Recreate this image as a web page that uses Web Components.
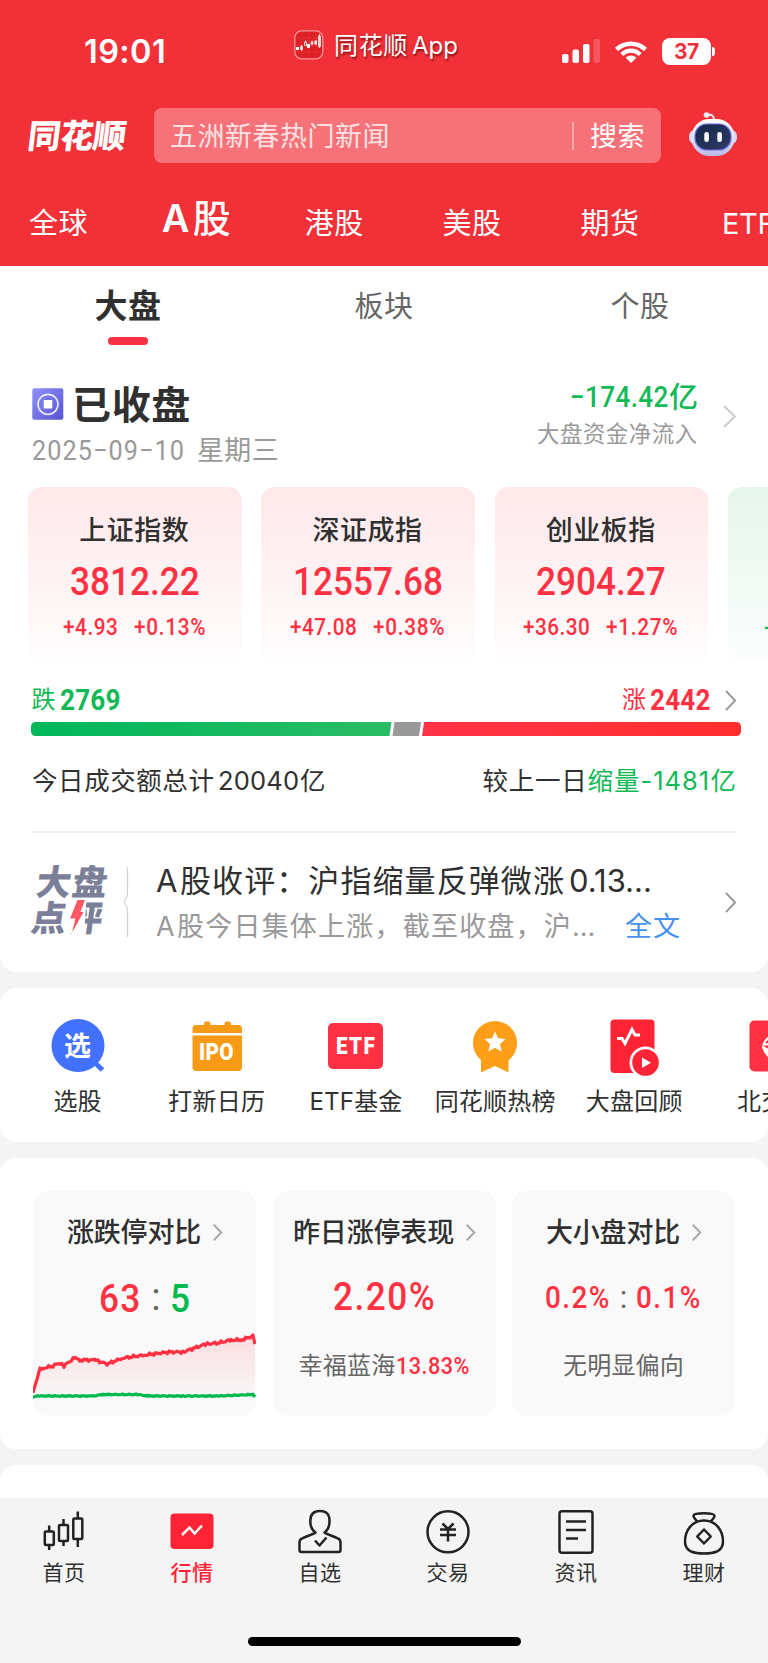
<!DOCTYPE html>
<html lang="zh-CN">
<head>
<meta charset="utf-8">
<meta name="viewport" content="width=device-width, initial-scale=1">
<title>同花顺 A股行情</title>
<style>
    :root {
        --red: #ff3142;
        --green: #12b956;
        --ink: #303030;
        --muted: #999999;
        --header: #f23038;
        --page: #f4f4f4;
    }

    body {
        margin: 0;
        background: var(--page);
        color: var(--ink);
        font-family: Inter, "Noto Sans CJK SC", sans-serif;
        overflow: hidden;
    }
</style>
</head>
<body>
<market-page></market-page>

<script>
function defineView( name, html, setup ) {
    const template = document.createElement('template');
    template.innerHTML = html;

    window.customElements.define( name, class extends HTMLElement {
        constructor(){
            super();
            this.attachShadow( { mode:"open" } );
            this.shadowRoot.appendChild( template.content.cloneNode( true ) );
        }

        connectedCallback() {
            if ( setup ) {
                setup( this, this.shadowRoot );
            }
        }
    } );
}

/* One line of text. w spreads the letters over a given width, num sets condensed figures. */
defineView( 'text-line', `
    <style>
        :host {
            display: inline-block;
            flex: none;
            white-space: nowrap;
            line-height: 1;
            text-align: left;
        }
        :host([num]) {
            font-family: Roboto, "Noto Sans CJK SC", sans-serif;
        }
        :host([num][w]) span {
            display: inline-block;
            transform: scaleX(.9);
            transform-origin: 0 50%;
        }
    </style>
    <span><slot></slot></span>
`, ( host, root ) => {
    const weight = host.getAttribute('weight');
    const color = host.getAttribute('color');
    host.style.fontSize = host.getAttribute('size') + 'px';
    if ( weight ) host.style.fontWeight = weight;
    if ( color ) host.style.color = color;

    const w = Number( host.getAttribute('w') );
    if ( w ) {
        host.style.width = 'auto';
        host.style.letterSpacing = '0px';
        const scale = host.hasAttribute('num') ? .9 : 1;
        const natural = root.querySelector('span').offsetWidth;
        const count = [ ...host.textContent ].length;
        host.style.letterSpacing = ( ( w / scale - natural ) / count ).toFixed( 3 ) + 'px';
        host.style.width = w + 'px';
    }
} );

const icons = {
    chevron: [ 12, 24, `<path d="M1 1 11 12 1 23" fill="none" stroke="currentColor" stroke-width="2" vector-effect="non-scaling-stroke"/>` ],
    app: [ 30, 30, `
        <rect x=".8" y=".8" width="28" height="28" rx="7" fill="#dd2025" stroke="#f5969a" stroke-width="1.3"/>
        <path d="M2 8h25M2 15h25M2 22h25M8 2v25M15 2v25M22 2v25" stroke="#ea3a3d" stroke-width=".5"/>
        <path d="M2 17h3v3H2zM13 14h3v4h-3zM20.500 10.500h2.500v4h-2.500z" fill="#fff"/>
        <path d="M6.500 16.500h2v3h-2zM10.500 12h2v3.500h-2zM17 12h2v2h-2zM24.500 6h2v10.500h-2zM7.500 15v6M11.500 10.500v2M18 10.500v5M25.500 4v14" fill="none" stroke="#fff" stroke-width=".8"/>` ],
    signal: [ 38, 25, `
        <rect x="0" y="15" width="6.500" height="9" rx="2" fill="#fff"/>
        <rect x="10.500" y="10.500" width="6.500" height="13.500" rx="2" fill="#fff"/>
        <rect x="21" y="5" width="6.500" height="19" rx="2" fill="#fff"/>
        <rect x="31.500" y="0" width="6.500" height="24" rx="2" fill="#fff" opacity=".2"/>` ],
    wifi: [ 34, 24, `
        <path d="M1 8.800C10 .3 24 .3 33 8.800L30 12.200C23 5.200 11 5.200 4 12.200ZM6.300 14C12.500 8.100 21.500 8.100 27.700 14L24.600 17C20 12.700 14 12.700 9.400 17ZM11.700 18.700C15 15.900 19 15.900 22.300 18.700L17 24Z" fill="#fff"/>` ],
    robot: [ 48, 46, `
        <defs>
            <linearGradient id="shell" x2="0" y2="1"><stop stop-color="#fff"/><stop offset=".6" stop-color="#dcdff5"/><stop offset="1" stop-color="#b9b9e6"/></linearGradient>
            <linearGradient id="face" x2="1" y2="1"><stop stop-color="#15294a"/><stop offset="1" stop-color="#2e3a66"/></linearGradient>
        </defs>
        <path d="M18 4.500Q24 2 25 8" fill="none" stroke="#f0effa" stroke-width="2"/>
        <circle cx="17.500" cy="4" r="2.800" fill="#f3eefa"/>
        <rect x="0" y="19" width="48" height="14" rx="6" fill="#d7daf2"/>
        <rect x="2.500" y="8" width="43" height="37" rx="18" fill="url(#shell)"/>
        <rect x="6" y="13" width="36" height="26" rx="12" fill="url(#face)" stroke="#7069df" stroke-width="1.200"/>
        <rect x="15.300" y="21" width="4.600" height="10" rx="2.300" fill="#fff"/>
        <rect x="28.300" y="21" width="4.600" height="10" rx="2.300" fill="#fff"/>` ],
    coin: [ 32, 32, `
        <defs><linearGradient id="coin" x2="1" y2="1"><stop stop-color="#8f92fa"/><stop offset="1" stop-color="#5652d0"/></linearGradient></defs>
        <rect x=".3" y=".3" width="31" height="31.500" rx="2" fill="url(#coin)"/>
        <circle cx="16" cy="16.300" r="10" fill="none" stroke="#fff" stroke-opacity=".85" stroke-width="1.700"/>
        <rect x="11.700" y="12" width="8.600" height="8.600" rx=".8" fill="#fff"/>` ],
    brace: [ 6, 70, `<path d="M4.500 0V27Q4.500 29.500 2.500 32Q.8 34.500 2.500 37.500Q4.500 40 4.500 43V70" fill="none" stroke="#d2d2d2" stroke-width="1.200"/>` ],
    bolt: [ 14, 33, `<path d="M6 0H13.500L9.800 12H13L3 32.500 5.200 18.500H0Z" fill="#ff5763"/>` ],
    pick: [ 54, 54, `<circle cx="27" cy="26.500" r="26.500" fill="#4271ff"/><path d="M43 43 51.500 51" stroke="#4271ff" stroke-width="5"/>` ],
    calendar: [ 50, 50, `
        <path d="M4 4h8V2.500Q12 .5 14 .5h2.500Q18.500 .5 18.500 2.500V4h14V2.500Q32.500 .5 34.500 .5H37Q39 .5 39 2.500V4h7Q50 4 50 8v4H.5V8Q.5 4 4 4Z" fill="#f79b17"/>
        <path d="M.5 14.500H50V46Q50 50 46 50H4.500Q.5 50 .5 46Z" fill="#f79b17"/>` ],
    plate: [ 55, 46, `<rect width="55" height="46" rx="5" fill="#ff3142"/>` ],
    medal: [ 44, 53, `
        <path d="M8 38V52.500L22 46 35.500 52.500V38Z" fill="#ff9e18"/>
        <circle cx="22" cy="23" r="22" fill="#ff9e18"/>
        <path d="M22 11.500 25 18.300 32.500 19 27 24 28.600 31.500 22 27.700 15.400 31.500 17 24 11.500 19 19 18.300Z" fill="#fff"/>` ],
    review: [ 50, 57, `
        <rect x=".5" y=".5" width="44" height="53.500" rx="4" fill="#ff2435"/>
        <path d="M7 19.500H12L15 24.500 22 10.500 25 16H30" fill="none" stroke="#fff" stroke-width="3"/>
        <circle cx="35.500" cy="43.500" r="16" fill="#fff"/>
        <circle cx="35.500" cy="43.500" r="13.300" fill="#ff2435"/>
        <path d="M32 38.500 41 43.800 32 49Z" fill="#fff"/>` ],
    north: [ 50, 52, `
        <rect x=".5" y=".5" width="49" height="51" rx="5" fill="#ff3142"/>
        <path d="M20 16Q14 20 13 27Q15 34 20 38V29L14 26 20 25Z" fill="#fff"/><path d="M17 23l6-5" stroke="#ff3142" stroke-width="2"/>` ],
    candles: [ 44, 44, `
        <g fill="none" stroke="#222" stroke-width="2.500">
            <rect x="2.800" y="21.500" width="9" height="13.500" rx="1"/><path d="M7.200 15.500V21.500M7.200 35V40"/>
            <rect x="17" y="15" width="9" height="16" rx="1"/><path d="M21.500 9V15M21.500 31V36"/>
            <rect x="31.300" y="8.500" width="9" height="20.500" rx="1"/><path d="M35.800 1.500V8.500M35.800 29V37"/>
        </g>` ],
    quote: [ 44, 44, `
        <rect x=".5" y="3.500" width="43" height="35.500" rx="4" fill="#ff2435"/>
        <path d="M12 25 19.500 17.500 24.500 23.500 32 15.500" fill="none" stroke="#fff" stroke-width="2.500"/>` ],
    person: [ 44, 44, `
        <g fill="none" stroke="#222" stroke-width="2.500" stroke-linejoin="round">
            <path d="M17.500 22.500Q12.300 19 12.300 11Q12.300 1 22 1T31.500 11Q31.500 19 26.500 22.500C27 24 39 27 41.500 29.500Q42.500 30.500 42.500 33V40Q42.500 42 40.500 42H3.500Q1.500 42 1.500 40V33Q1.500 30.500 2.500 29.500C5 27 17 24 17.500 22.500Z"/>
            <path d="M17 30.500 21.500 35.500 28.500 27.500"/>
        </g>` ],
    yen: [ 44, 44, `
        <g fill="none" stroke="#222" stroke-width="2.500">
            <circle cx="22" cy="21.800" r="20.500"/>
            <path d="M16.500 13.500 22 19 27.500 13.500M14 19.500H30M14 25H30M22 19V31.500"/>
        </g>` ],
    news: [ 44, 44, `
        <g fill="none" stroke="#222" stroke-width="2.500">
            <rect x="5.500" y="1.300" width="33" height="41.500" rx="2.500"/>
            <path d="M12 11.500H32M12 20H32M12 28.500H24"/>
        </g>` ],
    purse: [ 44, 44, `
        <g fill="none" stroke="#222" stroke-width="2.500" stroke-linejoin="round">
            <path d="M15.500 12C14.500 9.500 11.500 8.500 11.500 6Q11.500 3.200 22 3.200T32.500 6C32.500 8.500 29.500 9.500 28.500 12"/>
            <path d="M22 10.500C34 10.500 41 20.500 41 31.500Q41 38.500 35 41.500Q30 43.500 22 43.500T9 41.500Q3 38.500 3 31.500C3 20.500 10 10.500 22 10.500Z"/>
            <path d="M22 19.500 28.800 26.500 22 33.500 15.200 26.500Z"/>
        </g>` ]
};

defineView( 'app-icon', `
    <style>
        :host { display: block; flex: none; }
        svg { display: block; width: 100%; height: 100%; overflow: visible; }
    </style>
    <svg preserveAspectRatio="none"></svg>
`, ( host, root ) => {
    const [ width, height, shapes ] = icons[ host.getAttribute('name') ];
    const svg = root.querySelector('svg');
    svg.setAttribute( 'viewBox', `0 0 ${ width } ${ height }` );
    svg.innerHTML = shapes;
    host.style.width = ( host.getAttribute('width') || width ) + 'px';
    host.style.height = ( host.getAttribute('height') || height ) + 'px';
} );

defineView( 'status-bar', `
    <style>
        :host { display: flex; height: 108px; color: #fff; padding: 0 53px 0 84px; }
        .time, .system { height: 102px; display: flex; align-items: center; }
        .time { height: 104px; }
        .app { height: 90px; display: flex; align-items: center; gap: 10px; margin-left: 128px; }
        .app text-line { text-shadow: 1px 2px 2px rgba(60, 0, 0, .6); padding-top: 1px; }
        .system { margin-left: auto; gap: 14px; }
        .battery { display: flex; align-items: center; gap: 1px; }
        .level { width: 49px; height: 27px; border-radius: 8px; background: #fff; color: var(--header); display: flex; align-items: center; justify-content: center; }
        .nub { width: 3px; height: 9px; border-radius: 0 4px 4px 0; background: #fff; }
    </style>
    <div class="time"><text-line size="32.5" weight="600" w="82">19:01</text-line></div>
    <div class="app">
        <app-icon name="app"></app-icon>
        <text-line size="24" w="74">同花顺</text-line>
        <text-line size="24" w="46" style="margin-left: -6px">App</text-line>
    </div>
    <div class="system">
        <app-icon name="signal"></app-icon>
        <app-icon name="wifi"></app-icon>
        <div class="battery">
            <div class="level"><text-line size="21" weight="700" w="25">37</text-line></div>
            <div class="nub"></div>
        </div>
    </div>
` );

defineView( 'search-bar', `
    <style>
        :host { display: flex; align-items: center; height: 55px; padding: 0 31px 0 28px; color: #fff; }
        .logo { width: 97px; padding-top: 1px; transform: skewX(-7deg); }
        .box { width: 507px; height: 55px; margin-left: 29px; box-sizing: border-box; padding: 0 16px 0 16px; border-radius: 8px; background: rgba(255, 255, 255, .32); display: flex; align-items: center; }
        .box text-line { padding-top: 2px; }
        .word { opacity: .8; }
        .rule { width: 2px; height: 28px; margin: 0 16px 0 auto; background: rgba(255, 255, 255, .4); }
        .robot { margin: -3px 0 0 auto; }
    </style>
    <div class="logo"><text-line size="33" weight="900" w="98">同花顺</text-line></div>
    <div class="box">
        <text-line class="word" size="27" w="220">五洲新春热门新闻</text-line>
        <div class="rule"></div>
        <text-line size="27" w="55">搜索</text-line>
    </div>
    <app-icon class="robot" name="robot"></app-icon>
` );

defineView( 'market-nav', `
    <style>
        :host { display: flex; height: 86px; padding-top: 17px; margin-left: -10.500px; color: #fff; overflow: hidden; }
        div { flex: none; width: 137.900px; display: flex; align-items: center; justify-content: center; }
        .on { padding-bottom: 12px; height: 75px; gap: 4px; }
    </style>
    <div><text-line size="29" w="59">全球</text-line></div>
    <div class="on"><text-line size="38" weight="600" w="27">A</text-line><text-line size="38" weight="500">股</text-line></div>
    <div><text-line size="29" w="59">港股</text-line></div>
    <div><text-line size="29" w="59">美股</text-line></div>
    <div><text-line size="29" w="59">期货</text-line></div>
    <div><text-line size="29" w="52">ETF</text-line></div>
` );

defineView( 'market-tabs', `
    <style>
        :host { display: grid; grid-template-columns: repeat(3, 1fr); height: 80px; padding: 0; }
        div { display: flex; flex-direction: column; align-items: center; }
        span { height: 60px; padding-top: 10px; display: flex; align-items: center; }
        i { width: 40px; height: 8px; margin-top: 1px; border-radius: 4px; background: var(--red); }
    </style>
    <div><span><text-line size="33" weight="700" w="67">大盘</text-line></span><i></i></div>
    <div><span><text-line size="29" w="59" color="#666">板块</text-line></span></div>
    <div><span><text-line size="29" w="59" color="#666">个股</text-line></span></div>
` );

defineView( 'market-state', `
    <style>
        :host { display: flex; height: 141px; padding: 0 32px; }
        .left { flex: 1; padding-top: 38px; }
        .name { height: 40px; display: flex; align-items: center; gap: 8px; }
        .date { height: 51px; padding-top: 1px; display: flex; align-items: center; gap: 12px; color: var(--muted); }
        .flow { padding-top: 31px; text-align: right; }
        .sum { height: 40px; display: flex; align-items: center; justify-content: flex-end; color: var(--green); }
        .hint { height: 34px; display: flex; align-items: center; color: var(--muted); }
        .more { margin: 59px 0 0 25px; color: #ccc; }
    </style>
    <div class="left">
        <div class="name"><app-icon name="coin"></app-icon><text-line size="39" weight="700" w="119">已收盘</text-line></div>
        <div class="date"><text-line num size="28" weight="400" w="153">2025−09−10</text-line><text-line size="27" w="82">星期三</text-line></div>
    </div>
    <div class="flow">
        <div class="sum"><text-line num size="29" weight="500" w="99">−174.42</text-line><text-line size="29" weight="500">亿</text-line></div>
        <div class="hint"><text-line size="22.5" w="161">大盘资金净流入</text-line></div>
    </div>
    <app-icon class="more" name="chevron" width="13" height="23"></app-icon>
` );

defineView( 'index-card', `
    <style>
        :host { flex: none; display: block; box-sizing: border-box; width: 213.6px; height: 175px; padding-top: 23px; border-radius: 14px; background: linear-gradient(#ffe8ea, #fffdfd); }
        :host([down]) { background: linear-gradient(#e6f6ec, #fcfefd); color: var(--green); }
        div { display: flex; align-items: center; justify-content: center; color: var(--red); }
        .title { height: 40px; padding-right: 1px; color: var(--ink); }
        .value { height: 60px; padding-top: 2px; }
        .change { height: 30px; gap: 16px; padding-right: 1px; }
        :host([down]) .change { color: var(--green); justify-content: flex-start; padding-left: 36px; }
    </style>
    <div class="title"><slot name="title"></slot></div>
    <div class="value"><slot name="value"></slot></div>
    <div class="change"><slot></slot></div>
` );

defineView( 'rise-fall', `
    <style>
        :host { display: block; }
        .counts { height: 44px; padding: 16px 32px 0 31.500px; display: flex; align-items: center; gap: 4px; }
        .counts app-icon { margin-left: 10px; color: #999; }
        .up, .down { display: flex; align-items: center; gap: 4px; }
        .down { color: var(--green); }
        .up { color: var(--red); margin-left: auto; }
        svg { display: block; margin-left: 30.500px; }
    </style>
    <div class="counts">
        <div class="down"><text-line size="24">跌</text-line><text-line num size="29" weight="700" w="61">2769</text-line></div>
        <div class="up"><text-line size="24">涨</text-line><text-line num size="29" weight="700" w="61">2442</text-line></div>
        <app-icon name="chevron" width="11" height="21"></app-icon>
    </div>
    <svg width="710" height="14" viewBox="0 0 709 14" preserveAspectRatio="none">
        <defs>
            <linearGradient id="fall"><stop stop-color="#00b75a"/><stop offset="1" stop-color="#29bc64"/></linearGradient>
            <linearGradient id="rise"><stop stop-color="#ff3347"/><stop offset="1" stop-color="#ff2f2f"/></linearGradient>
        </defs>
        <path d="M5 0H360L358 14H5Q0 14 0 9V5Q0 0 5 0Z" fill="url(#fall)"/>
        <path d="M363 0H389.500L387.500 14H361Z" fill="#999"/>
        <path d="M392.500 0H704Q709 0 709 5V9Q709 14 704 14H390.500Z" fill="url(#rise)"/>
    </svg>
` );

defineView( 'turnover-row', `
    <style>
        :host { display: flex; align-items: center; height: 95px; padding: 0 32px; border: 0; }
        div { display: flex; align-items: center; padding-bottom: 6px; }
        .diff { margin-left: auto; }
        .diff .g { color: var(--green); }
    </style>
    <div>
        <text-line size="25.500" w="183">今日成交额总计</text-line><text-line size="25.500" w="81" style="margin: 0 1px 0 3px">20040</text-line><text-line size="25.500">亿</text-line>
    </div>
    <div class="diff">
        <text-line size="25.500" w="105">较上一日</text-line><text-line class="g" size="25.500" w="53">缩量</text-line><text-line class="g" size="25.500" w="70">-1481</text-line><text-line class="g" size="25.500">亿</text-line>
    </div>
` );

defineView( 'market-comment', `
    <style>
        :host { display: flex; height: 139px; margin: 0 32px; border-top: 2px solid #f0f0f0; }
        .mark { position: relative; width: 73px; margin: 32px 0 0 -1px; color: #7b8098; transform: skewX(-8deg); display: flex; flex-direction: column; align-items: center; gap: 1px; }
        .mark app-icon { position: absolute; left: 36px; top: 35px; padding: 0 1px 0 3px; background: #fff; transform: skewX(4deg); }
        .brace { margin: 34px 0 0 19px; }
        .text { margin-left: 27px; padding-top: 24px; flex: 1; }
        .row { height: 46px; display: flex; align-items: center; }
        .row + .row { color: var(--muted); }
        .all { color: #4691f0; margin-left: 28px; }
        .go { margin-top: 59px; color: #999; }
    </style>
    <div class="mark">
        <text-line size="35" weight="900" w="72">大盘</text-line>
        <text-line size="35" weight="900" w="72">点评</text-line>
        <app-icon name="bolt"></app-icon>
    </div>
    <app-icon class="brace" name="brace"></app-icon>
    <div class="text">
        <div class="row">
            <text-line size="31" w="24">A</text-line><text-line size="31" w="385">股收评：沪指缩量反弹微涨</text-line><text-line size="31" w="83" style="margin-left: 4px">0.13...</text-line>
        </div>
        <div class="row">
            <text-line size="27" w="21">A</text-line><text-line size="27" w="395">股今日集体上涨，截至收盘，沪</text-line><text-line size="27" w="25">…</text-line>
            <text-line class="all" size="27" w="56">全文</text-line>
        </div>
    </div>
    <app-icon class="go" name="chevron" width="11" height="21"></app-icon>
` );

defineView( 'quick-entry', `
    <style>
        :host { flex: none; width: 139.2px; display: flex; flex-direction: column; align-items: center; padding-top: 31px; }
        .icon { height: 54px; display: flex; align-items: center; justify-content: center; position: relative; }
        .glyph { position: absolute; inset: 0; display: flex; align-items: center; justify-content: center; color: #fff; }
        .label { height: 57px; display: flex; align-items: center; }
    </style>
    <div class="icon"><slot name="icon"></slot><div class="glyph"><slot name="glyph"></slot></div></div>
    <div class="label"><slot></slot></div>
` );

defineView( 'stat-card', `
    <style>
        :host { display: block; box-sizing: border-box; width: 223px; height: 225px; padding-top: 16px; border-radius: 15px; background: #f9f9f9; overflow: hidden; }
        div { display: flex; align-items: center; justify-content: center; }
        .title { height: 50px; gap: 12px; }
        .title app-icon { color: #aaa; }
        .value { height: 80px; color: var(--red); }
        .note { height: 57px; color: #666; }
        :host([chart]) .note { height: 76px; margin-top: -8px; }
    </style>
    <div class="title"><slot name="title"></slot><app-icon name="chevron" width="9" height="17"></app-icon></div>
    <div class="value"><slot name="value"></slot></div>
    <div class="note"><slot></slot></div>
` );

/* Limit-up count (red, filled) over limit-down count (green). */
defineView( 'limit-chart', `
    <style>
        :host { display: block; width: 223px; height: 70px; }
        svg { display: block; }
        path { fill: none; stroke-width: 3.200; stroke-linejoin: round; }
    </style>
    <svg width="223" height="70" viewBox="0 0 223 70">
        <defs><linearGradient id="area" x2="0" y2="1"><stop stop-color="#ff3142" stop-opacity=".14"/><stop offset="1" stop-color="#ff3142" stop-opacity=".01"/></linearGradient></defs>
        <path class="area" style="fill: url(#area)"/>
        <path class="up" stroke="#ff3142"/>
        <path class="down" stroke="#00b94f"/>
    </svg>
`, ( host, root ) => {
    const trace = ( points, noise ) => {
        let d = '';
        for ( let i = 1; i < points.length; i++ ) {
            const [ x0, y0 ] = points[ i - 1 ];
            const [ x1, y1 ] = points[ i ];
            for ( let x = x0; x < x1; x += 1.5 ) {
                const y = y0 + ( y1 - y0 ) * ( x - x0 ) / ( x1 - x0 );
                const shake = noise * ( Math.sin( x * 2.3 ) + Math.sin( x * 5.1 + 1 ) ) / 2;
                d += ( d ? 'L' : 'M' ) + x.toFixed( 1 ) + ' ' + ( y + shake ).toFixed( 1 );
            }
        }
        const last = points[ points.length - 1 ];
        return d + `L${ last[0] } ${ last[1] }`;
    };
    const up = trace( [ [ 0, 60 ], [ 4, 47 ], [ 7, 37 ], [ 11, 36 ], [ 20, 34 ], [ 26, 31 ], [ 31, 34 ], [ 41, 26 ], [ 48, 28 ], [ 62, 28 ], [ 74, 32 ], [ 90, 26 ], [ 112, 23 ], [ 136, 20 ], [ 150, 20 ], [ 173, 12 ], [ 185, 11 ], [ 198, 8 ], [ 208, 8 ], [ 220, 4 ], [ 222, 12 ] ], 1.6 );
    root.querySelector('.up').setAttribute( 'd', up );
    root.querySelector('.area').setAttribute( 'd', up + 'V65H0Z' );
    root.querySelector('.down').setAttribute( 'd', trace( [ [ 0, 65 ], [ 5, 64 ], [ 60, 64 ], [ 70, 62.5 ], [ 105, 62.5 ], [ 115, 64 ], [ 150, 64 ], [ 185, 64 ], [ 220, 62.5 ], [ 222, 65 ] ], .6 ) );
} );

defineView( 'tab-item', `
    <style>
        :host { flex: 1; display: flex; flex-direction: column; align-items: center; padding-top: 12px; }
        .label { height: 36px; display: flex; align-items: center; }
        :host([on]) { color: #ff2435; font-weight: 500; }
    </style>
    <slot name="icon"></slot>
    <div class="label"><slot></slot></div>
` );

defineView( 'bottom-bar', `
    <style>
        :host { display: block; height: 165px; background: var(--page); }
        .tabs { display: flex; height: 138.5px; }
        .home { width: 273px; height: 9.500px; margin: 0 auto; border-radius: 5px; background: #000; }
    </style>
    <div class="tabs"><slot></slot></div>
    <div class="home"></div>
` );

defineView( 'market-page', `
    <style>
        :host { display: block; width: 768px; height: 1663px; overflow: hidden; }
        header { height: 266px; background: var(--header); overflow: hidden; }
        section { background: #fff; border-radius: 16px; margin-top: 16px; overflow: hidden; }
        section:first-of-type { margin-top: 0; border-radius: 0 0 16px 16px; height: 706px; }
        .cards { display: flex; gap: 19.700px; padding-left: 28px; }
        .entries { display: flex; height: 154px; padding-left: 8px; }
        .stats { display: flex; justify-content: space-between; height: 225px; padding: 33px; }
        .next { height: 33px; border-radius: 16px 16px 0 0; }
    </style>
    <header>
        <status-bar></status-bar>
        <search-bar></search-bar>
        <market-nav></market-nav>
    </header>
    <section>
        <market-tabs></market-tabs>
        <market-state></market-state>
        <div class="cards">
            <index-card>
                <text-line slot="title" size="27" weight="500" w="110">上证指数</text-line>
                <text-line slot="value" num size="39" weight="500" w="130">3812.22</text-line>
                <text-line num size="23" weight="500" w="55">+4.93</text-line>
                <text-line num size="23" weight="500" w="72">+0.13%</text-line>
            </index-card>
            <index-card>
                <text-line slot="title" size="27" weight="500" w="110">深证成指</text-line>
                <text-line slot="value" num size="39" weight="500" w="150">12557.68</text-line>
                <text-line num size="23" weight="500" w="67">+47.08</text-line>
                <text-line num size="23" weight="500" w="72">+0.38%</text-line>
            </index-card>
            <index-card>
                <text-line slot="title" size="27" weight="500" w="110">创业板指</text-line>
                <text-line slot="value" num size="39" weight="500" w="130">2904.27</text-line>
                <text-line num size="23" weight="500" w="67">+36.30</text-line>
                <text-line num size="23" weight="500" w="72">+1.27%</text-line>
            </index-card>
            <index-card down><text-line num size="23" weight="500">-</text-line></index-card>
        </div>
        <rise-fall></rise-fall>
        <turnover-row></turnover-row>
        <market-comment></market-comment>
    </section>
    <section class="entries">
        <quick-entry>
            <app-icon slot="icon" name="pick"></app-icon>
            <text-line slot="glyph" size="27" weight="700">选</text-line>
            <text-line size="24" w="48">选股</text-line>
        </quick-entry>
        <quick-entry>
            <app-icon slot="icon" name="calendar"></app-icon>
            <text-line slot="glyph" num size="23" weight="900" w="35" style="padding-top: 13px">IPO</text-line>
            <text-line size="24" w="97">打新日历</text-line>
        </quick-entry>
        <quick-entry>
            <app-icon slot="icon" name="plate"></app-icon>
            <text-line slot="glyph" num size="23" weight="900" w="40">ETF</text-line>
            <text-line size="24" w="93">ETF基金</text-line>
        </quick-entry>
        <quick-entry>
            <app-icon slot="icon" name="medal"></app-icon>
            <text-line size="24" w="121">同花顺热榜</text-line>
        </quick-entry>
        <quick-entry>
            <app-icon slot="icon" name="review" style="margin: 2px 0 0 2px"></app-icon>
            <text-line size="24" w="97">大盘回顾</text-line>
        </quick-entry>
        <quick-entry>
            <app-icon slot="icon" name="north"></app-icon>
            <text-line size="24" w="73">北交所</text-line>
        </quick-entry>
    </section>
    <section class="stats">
        <stat-card chart>
            <text-line slot="title" size="27" weight="500" w="134">涨跌停对比</text-line>
            <text-line slot="value" num size="39" weight="500" w="42" style="padding-top: 4px">63</text-line>
            <text-line slot="value" num size="39" color="#666" style="padding: 0 9px 0 10px">:</text-line>
            <text-line slot="value" num size="39" weight="500" w="20" color="#00b94f" style="padding-top: 4px">5</text-line>
            <limit-chart></limit-chart>
        </stat-card>
        <stat-card>
            <text-line slot="title" size="27" weight="500" w="161">昨日涨停表现</text-line>
            <text-line slot="value" num size="39" weight="500" w="103">2.20%</text-line>
            <text-line size="24" w="97">幸福蓝海</text-line>
            <text-line num size="24" weight="500" color="#ff3142" w="74">13.83%</text-line>
        </stat-card>
        <stat-card>
            <text-line slot="title" size="27" weight="500" w="134">大小盘对比</text-line>
            <text-line slot="value" num size="31" weight="500" w="66">0.2%</text-line>
            <text-line slot="value" num size="31" color="#666" style="padding: 0 9px">:</text-line>
            <text-line slot="value" num size="31" weight="500" w="66">0.1%</text-line>
            <text-line size="24" w="121">无明显偏向</text-line>
        </stat-card>
    </section>
    <section class="next"></section>
    <bottom-bar>
        <tab-item><app-icon slot="icon" name="candles"></app-icon><text-line size="21" w="43">首页</text-line></tab-item>
        <tab-item on><app-icon slot="icon" name="quote"></app-icon><text-line size="21" w="43">行情</text-line></tab-item>
        <tab-item><app-icon slot="icon" name="person"></app-icon><text-line size="21" w="43">自选</text-line></tab-item>
        <tab-item><app-icon slot="icon" name="yen"></app-icon><text-line size="21" w="43">交易</text-line></tab-item>
        <tab-item><app-icon slot="icon" name="news"></app-icon><text-line size="21" w="43">资讯</text-line></tab-item>
        <tab-item><app-icon slot="icon" name="purse"></app-icon><text-line size="21" w="43">理财</text-line></tab-item>
    </bottom-bar>
` );
</script>
</body>
</html>
